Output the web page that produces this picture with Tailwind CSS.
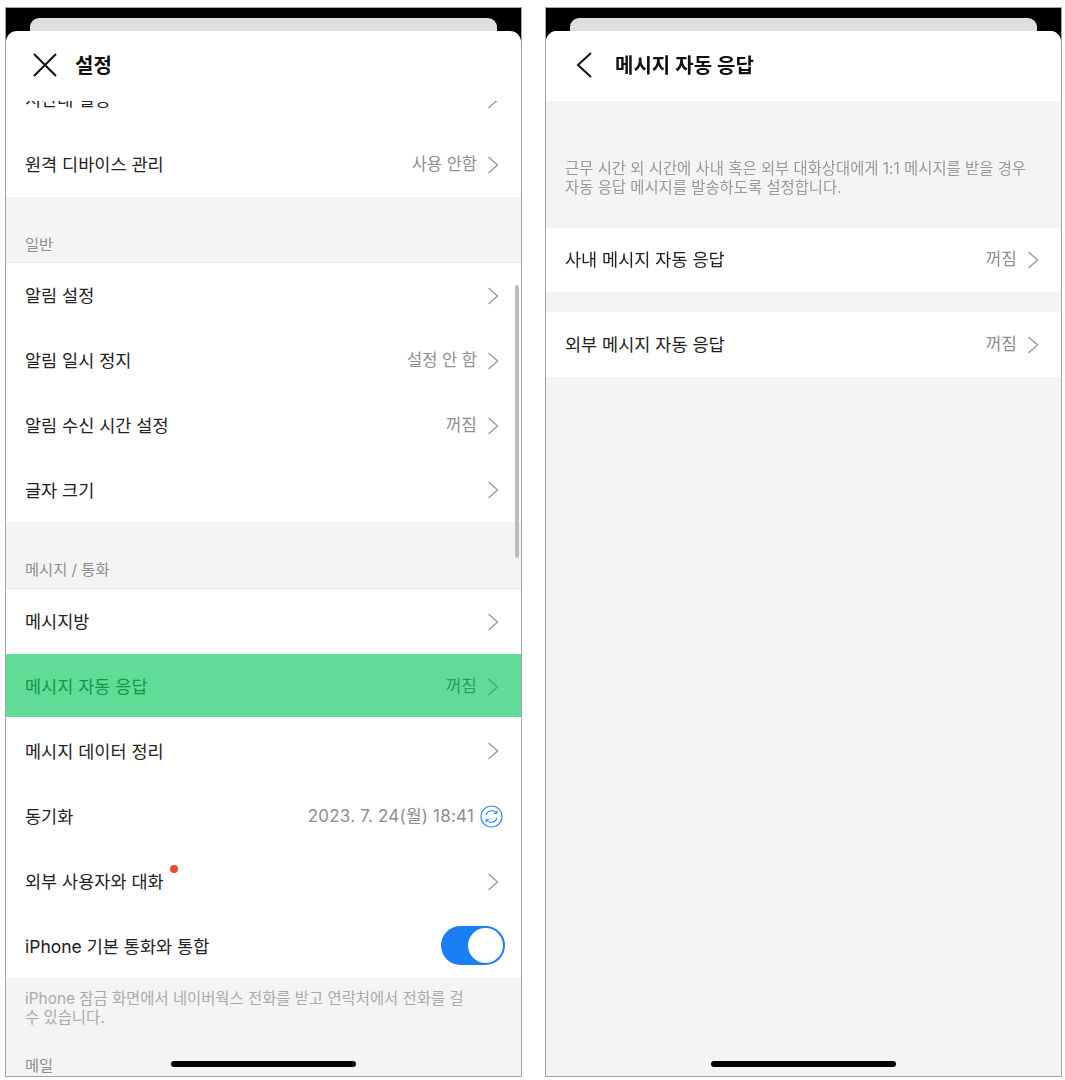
<!DOCTYPE html>
<html lang="ko">
<head>
<meta charset="utf-8">
<script src="https://cdn.jsdelivr.net/npm/@tailwindcss/browser@4"></script>
</head>
<body class="bg-white font-['Inter','Noto_Sans_CJK_KR',sans-serif] text-[#222]">
<div class="w-[1065px] h-[1080px] flex gap-[23px] pl-[5px] pt-[7px] blur-[0.4px]">

  <!-- LEFT PHONE -->
  <div class="relative w-[517px] h-[1070px] border border-[#a3a3a3] bg-black flex flex-col overflow-hidden">
    <div class="h-[23px] shrink-0 px-[24px] pt-[10px]"><div class="h-[13px] bg-[#dedede] rounded-t-[9px]"></div></div>
    <div class="flex-1 min-h-0 flex flex-col bg-white rounded-t-[11px] overflow-hidden">
      <div class="h-[70px] shrink-0 flex items-center pl-[26px] gap-[17px]">
        <svg class="w-[26px] h-[26px] -mt-[2px]" viewBox="0 0 26 26" fill="none" stroke="#111" stroke-width="2"><path d="M2 2 L24 24 M24 2 L2 24"/></svg>
        <span class="text-[20px] font-semibold text-[#111]">설정</span>
      </div>
      <div class="flex-1 min-h-0 overflow-hidden bg-[#f4f4f4]">
        <div class="-mt-[34px]">
          <div class="bg-white">
            <div class="h-[65px] flex items-center justify-between pl-[19px] pr-[22px]"><span class="text-[17.5px] pt-[2px]">시간대 설정</span><svg class="w-[12px] h-[18px]" viewBox="0 0 12 18" fill="none" stroke="#9a9a9a" stroke-width="1.4"><path d="M1.5 1 L10.5 9 L1.5 17"/></svg></div>
            <div class="h-[65px] flex items-center justify-between pl-[19px] pr-[22px]"><span class="text-[17.5px] pt-[2px]">원격 디바이스 관리</span><span class="flex items-center gap-[10px] text-[16.5px] text-[#8e8e8e]">사용 안함<svg class="w-[12px] h-[18px]" viewBox="0 0 12 18" fill="none" stroke="#9a9a9a" stroke-width="1.4"><path d="M1.5 1 L10.5 9 L1.5 17"/></svg></span></div>
          </div>
          <div class="h-[66px] flex items-end pl-[19px] pb-[5px] border-b border-[#e6e6e6] text-[15.3px] text-[#8e8e8e]">일반</div>
          <div class="bg-white">
            <div class="h-[65px] flex items-center justify-between pl-[19px] pr-[22px]"><span class="text-[17.5px] pt-[2px]">알림 설정</span><svg class="w-[12px] h-[18px]" viewBox="0 0 12 18" fill="none" stroke="#9a9a9a" stroke-width="1.4"><path d="M1.5 1 L10.5 9 L1.5 17"/></svg></div>
            <div class="h-[65px] flex items-center justify-between pl-[19px] pr-[22px]"><span class="text-[17.5px] pt-[2px]">알림 일시 정지</span><span class="flex items-center gap-[10px] text-[16.5px] text-[#8e8e8e]">설정 안 함<svg class="w-[12px] h-[18px]" viewBox="0 0 12 18" fill="none" stroke="#9a9a9a" stroke-width="1.4"><path d="M1.5 1 L10.5 9 L1.5 17"/></svg></span></div>
            <div class="h-[65px] flex items-center justify-between pl-[19px] pr-[22px]"><span class="text-[17.5px] pt-[2px]">알림 수신 시간 설정</span><span class="flex items-center gap-[10px] text-[17px] text-[#8e8e8e]">꺼짐<svg class="w-[12px] h-[18px]" viewBox="0 0 12 18" fill="none" stroke="#9a9a9a" stroke-width="1.4"><path d="M1.5 1 L10.5 9 L1.5 17"/></svg></span></div>
            <div class="h-[64px] flex items-center justify-between pl-[19px] pr-[22px]"><span class="text-[17.5px] pt-[2px]">글자 크기</span><svg class="w-[12px] h-[18px]" viewBox="0 0 12 18" fill="none" stroke="#9a9a9a" stroke-width="1.4"><path d="M1.5 1 L10.5 9 L1.5 17"/></svg></div>
          </div>
          <div class="h-[67px] flex items-end pl-[19px] pb-[6px] border-b border-[#e6e6e6] text-[15.3px] text-[#8e8e8e]">메시지 / 통화</div>
          <div class="bg-white">
            <div class="h-[65px] flex items-center justify-between pl-[19px] pr-[22px]"><span class="text-[17.5px] pt-[2px]">메시지방</span><svg class="w-[12px] h-[18px]" viewBox="0 0 12 18" fill="none" stroke="#9a9a9a" stroke-width="1.4"><path d="M1.5 1 L10.5 9 L1.5 17"/></svg></div>
            <div class="h-[63px] pt-[2px] flex items-center justify-between pl-[19px] pr-[22px] bg-[#60dc97] text-[#0f9a48]"><span class="text-[17.5px] pt-[2px]">메시지 자동 응답</span><span class="flex items-center gap-[10px] text-[17px] text-[#2a9d5c]">꺼짐<svg class="w-[12px] h-[18px]" viewBox="0 0 12 18" fill="none" stroke="#3fae6e" stroke-width="1.4"><path d="M1.5 1 L10.5 9 L1.5 17"/></svg></span></div>
            <div class="h-[66px] pt-[2px] flex items-center justify-between pl-[19px] pr-[22px]"><span class="text-[17.5px] pt-[2px]">메시지 데이터 정리</span><svg class="w-[12px] h-[18px]" viewBox="0 0 12 18" fill="none" stroke="#9a9a9a" stroke-width="1.4"><path d="M1.5 1 L10.5 9 L1.5 17"/></svg></div>
            <div class="h-[65px] pt-[2px] flex items-center justify-between pl-[19px] pr-[18px]"><span class="text-[17.5px] pt-[2px]">동기화</span><span class="flex items-center gap-[6px] text-[17px] tracking-[0.2px] text-[#8e8e8e]">2023. 7. 24(월) 18:41<svg class="w-[23px] h-[23px]" viewBox="0 0 23 23" fill="none" stroke="#3b8ef0" stroke-width="1.2"><circle cx="11.5" cy="11.5" r="10.5"/><path d="M6 10 A6 6 0 0 1 16.5 8 M17 13 A6 6 0 0 1 6.5 15"/><path d="M16.8 5.5 V8.5 H13.8 M6.2 17.5 V14.5 H9.2"/></svg></span></div>
            <div class="h-[65px] pt-[2px] flex items-center justify-between pl-[19px] pr-[22px]"><span class="relative text-[17.5px] pt-[2px]">외부 사용자와 대화<span class="absolute -right-[14px] top-[-2px] w-[8px] h-[8px] rounded-full bg-[#f4472f]"></span></span><svg class="w-[12px] h-[18px]" viewBox="0 0 12 18" fill="none" stroke="#9a9a9a" stroke-width="1.4"><path d="M1.5 1 L10.5 9 L1.5 17"/></svg></div>
            <div class="h-[65px] flex items-center justify-between pl-[19px] pr-[16px]"><span class="text-[17.5px] pt-[4px]">iPhone 기본 통화와 통합</span><span class="w-[64px] h-[39px] rounded-full bg-[#1a7ef5] flex items-center justify-end pr-[2px]"><span class="w-[35px] h-[35px] rounded-full bg-white"></span></span></div>
          </div>
          <p class="pl-[19px] pt-[11px] text-[15.4px] leading-[19px] text-[#aaa]">iPhone 잠금 화면에서 네이버웍스 전화를 받고 연락처에서 전화를 걸<br>수 있습니다.</p>
          <p class="pl-[19px] pt-[28px] text-[15.3px] text-[#8e8e8e]">메일</p>
        </div>
      </div>
    </div>
    <div class="absolute right-[2px] top-[277px] w-[4px] h-[273px] rounded-full bg-[#bdbdbd]"></div>
    <div class="absolute left-[165px] bottom-[9px] w-[185px] h-[6px] rounded-full bg-black"></div>
  </div>

  <!-- RIGHT PHONE -->
  <div class="relative w-[517px] h-[1070px] border border-[#a3a3a3] bg-black flex flex-col overflow-hidden">
    <div class="h-[23px] shrink-0 px-[24px] pt-[10px]"><div class="h-[13px] bg-[#dedede] rounded-t-[9px]"></div></div>
    <div class="flex-1 min-h-0 flex flex-col bg-[#f4f4f4] rounded-t-[11px] overflow-hidden">
      <div class="h-[70px] shrink-0 flex items-center bg-white pl-[30px] gap-[22px]">
        <svg class="w-[17px] h-[26px] -mt-[2px]" viewBox="0 0 17 26" fill="none" stroke="#111" stroke-width="2"><path d="M15 1 L2 13 L15 25"/></svg>
        <span class="text-[20px] font-semibold text-[#111]">메시지 자동 응답</span>
      </div>
      <p class="pl-[19px] pt-[58px] pb-[31px] text-[15.4px] leading-[19px] text-[#999]">근무 시간 외 시간에 사내 혹은 외부 대화상대에게 1:1 메시지를 받을 경우<br>자동 응답 메시지를 발송하도록 설정합니다.</p>
      <div class="h-[64px] bg-white flex items-center justify-between pl-[19px] pr-[22px]"><span class="text-[17.5px]">사내 메시지 자동 응답</span><span class="flex items-center gap-[10px] text-[17px] text-[#8e8e8e]">꺼짐<svg class="w-[12px] h-[18px]" viewBox="0 0 12 18" fill="none" stroke="#9a9a9a" stroke-width="1.4"><path d="M1.5 1 L10.5 9 L1.5 17"/></svg></span></div>
      <div class="h-[65px] mt-[20px] bg-white flex items-center justify-between pl-[19px] pr-[22px]"><span class="text-[17.5px] pt-[2px]">외부 메시지 자동 응답</span><span class="flex items-center gap-[10px] text-[17px] text-[#8e8e8e]">꺼짐<svg class="w-[12px] h-[18px]" viewBox="0 0 12 18" fill="none" stroke="#9a9a9a" stroke-width="1.4"><path d="M1.5 1 L10.5 9 L1.5 17"/></svg></span></div>
    </div>
    <div class="absolute left-[165px] bottom-[9px] w-[185px] h-[6px] rounded-full bg-black"></div>
  </div>
</div>
</body>
</html>
